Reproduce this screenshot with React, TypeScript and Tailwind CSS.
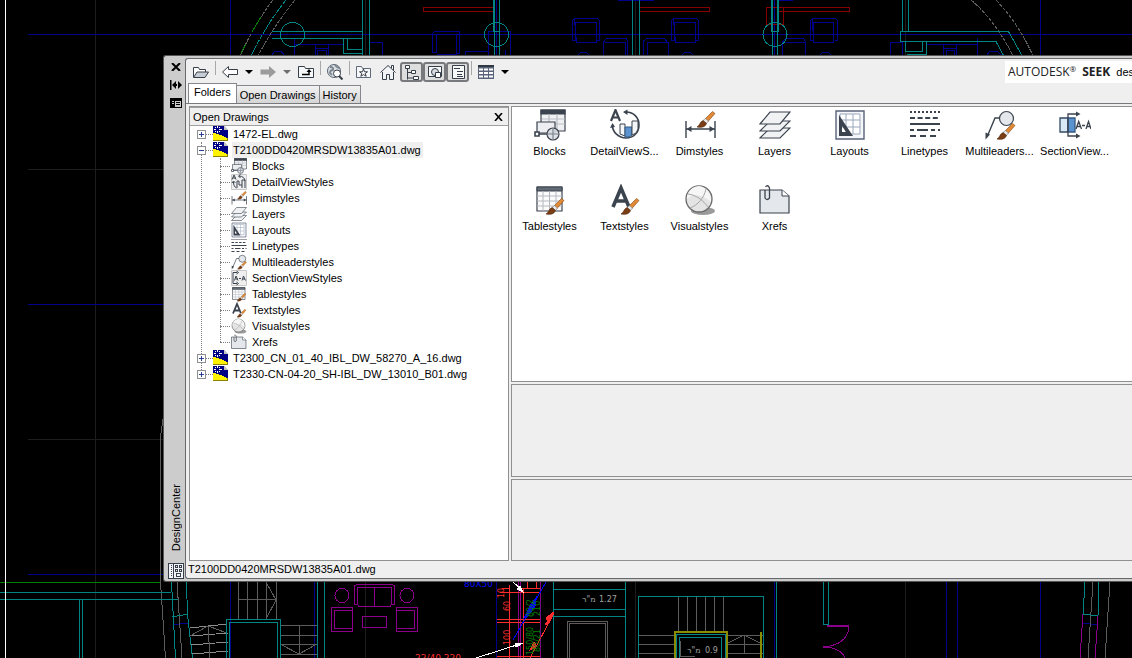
import { useState, type ReactNode } from 'react';

type IconName =
  | 'blocks'
  | 'detail'
  | 'detailSmall'
  | 'dim'
  | 'layers'
  | 'layouts'
  | 'linetypes'
  | 'multileader'
  | 'section'
  | 'sectionSmall'
  | 'table'
  | 'text'
  | 'visual'
  | 'xrefs';

interface StyleItem {
  name: string;
  label: string;
  icon: IconName;
  treeIcon?: IconName;
}

const items: StyleItem[] = [
  { name: 'Blocks', label: 'Blocks', icon: 'blocks' },
  { name: 'DetailViewStyles', label: 'DetailViewS...', icon: 'detail', treeIcon: 'detailSmall' },
  { name: 'Dimstyles', label: 'Dimstyles', icon: 'dim' },
  { name: 'Layers', label: 'Layers', icon: 'layers' },
  { name: 'Layouts', label: 'Layouts', icon: 'layouts' },
  { name: 'Linetypes', label: 'Linetypes', icon: 'linetypes' },
  { name: 'Multileaderstyles', label: 'Multileaders...', icon: 'multileader' },
  { name: 'SectionViewStyles', label: 'SectionView...', icon: 'section', treeIcon: 'sectionSmall' },
  { name: 'Tablestyles', label: 'Tablestyles', icon: 'table' },
  { name: 'Textstyles', label: 'Textstyles', icon: 'text' },
  { name: 'Visualstyles', label: 'Visualstyles', icon: 'visual' },
  { name: 'Xrefs', label: 'Xrefs', icon: 'xrefs' },
];

const drawings = [
  '1472-EL.dwg',
  'T2100DD0420MRSDW13835A01.dwg',
  'T2300_CN_01_40_IBL_DW_58270_A_16.dwg',
  'T2330-CN-04-20_SH-IBL_DW_13010_B01.dwg',
];

const tabs = ['Folders', 'Open Drawings', 'History'];

function Brush({ x = 0, y = 0 }: { x?: number; y?: number }) {
  return (
    <g transform={`translate(${x} ${y})`}>
      <path d="M8 8 15.5 0.5 18 2.5 11 10.5Z" fill="#e08a35" stroke="#8a4715" strokeWidth="0.6" />
      <path d="M6 9.5 8.5 7.5 11.5 10 9.5 12.5Z" fill="#e8e8e8" stroke="#777" strokeWidth="0.6" />
      <path d="M0 16C3 14.500 2.500 11 6 9.500L9.500 12.500C8.500 16 4 17 0 16Z" fill="#7a3d14" stroke="#4f260b" strokeWidth="0.6" />
    </g>
  );
}

const ink = '#3b434e';

const glyphs: Record<IconName, ReactNode> = {
  blocks: (
    <g stroke={ink} strokeWidth="1.2">
      <path d="M7 1h24v21H7z" fill="#eef0f2" />
      <path d="M7 1h24v4H7z" fill={ink} />
      <path d="M15 5v8M23 5v16M8 10h23M20 15h11" stroke="#b9bdc4" />
      <path d="M3 13h18v11H3z" fill="#eceef1" />
      <circle cx="19" cy="25" r="6" fill="#d9dde2" fillOpacity="0.9" />
      <path d="M5 25h8M14 25h10M19 20v10" stroke="#7d848e" />
      <path d="M5 25h8" />
      <path d="M1 23h4v4H1z" fill="#fff" strokeWidth="1.6" />
    </g>
  ),
  detail: (
    <g fill="none" stroke={ink} strokeWidth="1.6">
      <path d="M2 12 6.500 1 11 12M3.700 8.500h5.600" strokeWidth="2.2" />
      <path d="M17 3C25 3 30 9 30 16c0 8-6 13-13 13S3 23 3.500 16" />
      <path d="M18.500 0.500 14 3l4.500 3zM1 19l2.500-5L6 18z" fill={ink} stroke="none" />
      <path d="M11 15h5v12l-5-2z" fill="#f4f6f8" strokeWidth="1" />
      <path d="M16 18h7v8l-3 2h-4z" fill="#5b93d1" stroke="#34597f" strokeWidth="1" />
      <path d="M23 12h6v8l-2 4-4 2z" fill="#f4f6f8" strokeWidth="1" />
    </g>
  ),
  detailSmall: (
    <g fill="none" stroke={ink} strokeWidth="2">
      <path d="M1 1h30v30H1z" fill="#efefef" stroke="#c8c8c8" />
      <path d="m2 11 4-9 4 9M4 8h5M16 4c8 0 12 5 12 10M5 16c0 6 2 10 6 12M2 18l3-4 4 4M19 1l-4 3 4 4" />
      <path d="M12 14v14M12 14h4v8M16 22h6M22 12v16M22 12h6v16" />
    </g>
  ),
  dim: (
    <g>
      <path d="M2 12v17M31 12v17M2 20h29" stroke={ink} strokeWidth="1.4" />
      <path d="m2.500 20 5-3v6zM30.500 20l-5-3v6z" fill={ink} />
      <Brush x={13} y={2} />
    </g>
  ),
  layers: (
    <g stroke={ink} strokeWidth="1.2" fill="#f1f2f4">
      <path d="m1 29 10-10h20L21 29z" />
      <path d="m1 22 10-10h20L21 22z" />
      <path d="m1 15L11 3h20L21 15z" />
    </g>
  ),
  layouts: (
    <g>
      <path d="M2 2h28v28H2z" fill="#f4f6f9" stroke="#59647a" strokeWidth="1.4" />
      <path d="M6 5h20v20H6z" fill="#fff" stroke="#9ba7ba" />
      <path d="M12 5v20M19 5v20M6 11h20M6 18h20" stroke="#9ba7ba" />
      <path fillRule="evenodd" d="M5 6v21h14zM8 17v6h4z" fill={ink} />
    </g>
  ),
  linetypes: (
    <g stroke={ink} strokeWidth="2">
      <path d="M1 3h30" strokeDasharray="2 2" />
      <path d="M1 9h30" strokeDasharray="5 2.600" />
      <path d="M1 15h30" />
      <path d="M1 21h30" strokeDasharray="4 3 11 3" />
      <path d="M1 27h30" strokeDasharray="6 4" />
    </g>
  ),
  multileader: (
    <g>
      <path d="m3 28 8-19h6" fill="none" stroke={ink} strokeWidth="1.4" />
      <path d="m1.500 30.500 0-7 4.500 2z" fill={ink} />
      <circle cx="22.500" cy="9.500" r="7" fill="#e4e7ec" stroke={ink} strokeWidth="1.2" />
      <Brush x={13} y={14} />
    </g>
  ),
  section: (
    <g fill="none" stroke={ink} strokeWidth="1.300">
      <path d="M1 9h8v14H1z" fill="#dbe8f6" stroke="#34495f" />
      <path d="M9 9h7v14H9z" fill="#5b93d1" stroke="#34597f" />
      <path d="M18 5H9v22h9" />
      <path d="m17 2.500 4.500 2.500L17 7.500zM17 24.500l4.500 2.500-4.500 2.500z" fill={ink} stroke="none" />
      <path d="m17 20 2.700-7.500L22.500 20M18 17.500h3.500M23 16.500h3M27 20l2.500-7.500L32 20M28 17.500h3.500" />
    </g>
  ),
  sectionSmall: (
    <g fill="none" stroke={ink} strokeWidth="2">
      <path d="M1 1h30v30H1z" fill="#efefef" stroke="#c8c8c8" />
      <path d="M12 5H4v22h8M11 2l4 3-4 3M11 24l4 3-4 3" />
      <path d="m7 21 3-9 4 9M9 18h4M16 17h4M22 21l3-9 4 9M24 18h4" />
    </g>
  ),
  table: (
    <g>
      <path d="M3 3h25v24H3z" fill="#fbfbfb" stroke={ink} strokeWidth="1.2" />
      <path d="M3 3h25v4H3z" fill="#626a75" stroke={ink} />
      <path d="M9 7v20M15.500 7v20M22 7v20M3 12h25M3 17h25M3 22h25" stroke="#b4b8be" />
      <Brush x={12} y={14} />
    </g>
  ),
  text: (
    <g>
      <path d="M4 23 12 4l8 19M7 17h10" fill="none" stroke={ink} strokeWidth="3.600" />
      <Brush x={12} y={14} />
    </g>
  ),
  visual: (
    <g>
      <ellipse cx="19" cy="27" rx="12" ry="4" fill="#9a9a9a" />
      <circle cx="15" cy="15" r="13" fill="#e4e4e4" stroke="#6a6a6a" strokeWidth="1.300" />
      <path d="M15 2C6 3 3 9 3 15c4-6 16-5 24 3 0-9-4-15-12-16z" fill="#f6f6f6" />
      <path d="M6 24C14 21 20 14 22 5M4 10c8 1 15 6 20 13" fill="none" stroke="#a5a5a5" />
    </g>
  ),
  xrefs: (
    <g>
      <path d="M1 6h22l7 6v17H1z" fill="#e4e7eb" stroke={ink} strokeWidth="1.200" />
      <path d="M23 6v6h7" fill="#fff" stroke={ink} />
      <path d="M6 6v8q2 3 4.500 0V4Q8.500 0 6.500 3" fill="none" stroke={ink} strokeWidth="1.300" />
    </g>
  ),
};

function StyleIcon({ name, className }: { name: IconName; className: string }) {
  return (
    <svg viewBox="0 0 32 32" className={className} aria-hidden="true">
      {glyphs[name]}
    </svg>
  );
}

function DwgIcon() {
  return (
    <svg viewBox="0 0 16 16" className="h-4 w-4 shrink-0" shapeRendering="crispEdges" aria-hidden="true">
      <path d="M0 0h11l4 4v11H0z" fill="#000084" />
      <path d="M11 0v4h4z" fill="#c4c4c4" />
      <path d="M0 7h3v1h3v1h3v1h2v1h2v1h2v3H0z" fill="#fff200" />
      <path d="M0 14.500h15M14.500 12v3" stroke="#8a8200" fill="none" />
      <path d="M4 0h1v2H4zM4 5h1v2H4zM1 3h2v1H1zM6 3h3v1H6zM2 1h1v1H2zM6 1h1v1H6zM2 5h1v1H2zM6 5h1v1H6z" fill="#fff" />
    </svg>
  );
}

// Model space behind the palette, in canvas pixels
function FloorPlan() {
  return (
    <svg className="absolute inset-0 h-full w-full" shapeRendering="crispEdges" fill="none" aria-hidden="true">
      <g stroke="#1d1d1d">
        <path d="M95.500 0v658M365.500 0v658M635.500 0v658M905.500 0v658M28 169.500h140M28 439.500h140" />
      </g>
      <g stroke="#00008c">
        <path d="M28 34.500h1104M28 304.500h140M28 574.500h140" />
        <path d="M230.500 0v658M496.500 0v56M774.500 0v658M1040.500 0v658M496.500 582v76M314.500 582v76M946.500 582v76M957.500 582v76" />
        <path d="M294.500 38v18M294 44.500h49M315.500 56V44.500h13V56M315 48.500h13M317.500 56v-6h9v6M369 42.500h13V56M272 55l3-4h6l3 4" />
        <path d="M434.500 31.500h25v22h-3M434.500 31.500l-2 2v19h4v-18h20v20h-20M465.500 56v-5h23M488.500 56V31.500h22V56M505 50v6" />
        <path d="M574.500 18.500h23l2 2v20h-3M574.500 18.500l-2 2v20h3v-18h21v20h-20zM578 55l3-3h5l3 3M618 0.500h36" />
        <path d="M603.500 56V42l3-3.500h20l1 3V56M605 42.500h20V56M643.500 56V41l3-2.500h18l3 4M647.500 56V42.500h21V56" />
        <path d="M673.500 18.500h23l2 2v20h-3M673.500 18.500l-2 2v20h3v-18h21v20h-20zM682 55l3-3h5l3 3M779 0.500h14" />
        <path d="M782.500 56V42l3-3.500h18l2 3V56M784 42.500h21" />
        <path d="M812.500 18.500h23l2 2v20h-3M812.500 18.500l-2 2v20h3v-18h20v20h-20zM820 55l3-3h5l3 3" />
        <path d="M890.500 56V42.500h12V56M927 44.500h50M977.500 38v18M943.500 56V44.500h13V56M943 48.500h13M946.500 56v-6h8v6M987 55l3-4h7l4 4" />
        <path d="M173 624.500l15-1M1083 623.500l15 1" />
      </g>
      <g stroke="#850000">
        <path d="M423.500 7.500h71v4h-71zM639.500 7.500h70v4h-70zM778.500 7.500h71v4h-71zM766.500 7.500h17v17h-17z" />
      </g>
      <g stroke="#5c5c5c">
        <path d="M273 0Q255 23 240 56M295 0Q273 27 258 56M971 0Q995 20 1013 56M996 0Q1019 24 1033 56" strokeDasharray="4 1" />
        <path d="M261 17 252 32M246 44l-5 9" stroke="#0a7a0a" />
        <path d="M163.500 400v16l-3 20V582l5 76M177 582l5 76" />
        <path d="M238.500 582v37M247.500 582v37M257.500 582v37M266.500 582v37M276.500 582v37M238 599.500h38M266 582l10 18-10 19" />
        <path d="M280 625.500h37M280 635.500h37M280 644.500h37M280 654.500h37M299.500 625v29M280 644l19 10 18-10" />
        <path d="M190 628l37-4M191 636l37-3M191 645l37-3M192 654l36-3" stroke="#8c8c8c" />
        <path d="M190 636l18-10 19 7M208 626l2 32" />
        <path d="M567.500 658v-37h40v37M569.500 658v-35h36v35" />
        <path d="M678.500 597v36M687.500 597v35M696.500 597v35M705.500 597v35M714.500 597v35M723.500 597v36" />
        <path d="M639 635.500h35M639 644.500h35M639 653.500h35M728 635.500h35M728 644.500h35M728 653.500h35M744.500 635v18M728 643l16-8 16 8M680.500 641v15h14" />
        <path d="M1093 582l-5 76M1110 582l-5 76" />
      </g>
      <g stroke="#008484">
        <path d="M286 0Q266 25 251 56" strokeDasharray="5 1" />
        <circle cx="292.500" cy="34.500" r="12" />
        <circle cx="496.500" cy="34.500" r="12" />
        <circle cx="775" cy="34.500" r="12" />
        <path d="M272 31.500h90M272 38.500h90M362.500 0v56M369.500 0v56M343.500 38v15.500h19M347.500 38v11.500h15" />
        <path d="M494.500 0v56M499.500 0v56M493.500 0v31h6M632.500 0v56M639.500 0v56" />
        <path d="M772.500 0v56M777.500 0v56M771.500 0v31.500h7V0" />
        <path d="M902.500 0v31M908.500 0v31M900.500 41.500V31.500h108l14 25M900 41.500h96l8 15M905.500 41v10h17V41M907 54.500h19V41" />
        <path d="M0 592.500h171M0 599.500h178M79.500 599v59M82.500 599v59" />
        <path d="M171.500 582l4 76M186.500 582l1 33 5 43M172 617l16-3" />
        <path d="M226.500 658v-38.500h54V658M229.500 658v-35.500h48V658M317.500 582v76M324.500 582v76" />
        <path d="M553.500 582v76M625.500 582v76M553 589.500h72M553 609.500h72M553 616.500h72" />
        <path d="M638.500 658v-61.500h125V658M676.500 658v-23.500h49V658M679.500 658v-20.500h42V658M776.500 582v76" />
        <path d="M823.500 582v42.500h5V582M1085 582l-2 32 15 2 1-34" />
      </g>
      <path d="M0 582.500h160" stroke="#008000" />
      <path d="M5.500 0v658" stroke="#fff" />
      <g stroke="#8a008a">
        <circle cx="342" cy="595.500" r="7" />
        <circle cx="407" cy="595.500" r="7" />
        <path d="M354.500 604v-18l2-1.500h36l2 1.500v18h-3v-17h-34v17M354 604h3l2 2.500h31l2-2.500M374.500 588v18M362.500 616.500h24v11h-24z" />
        <path d="M352 607.500h-20.500v24h20.500v-3h-18v-18h18zM352.500 610v18M396.500 607.500h20.500v24h-20.500v-3h18v-18h-18zM396.500 610v18" />
        <path d="M518.500 582v76M520.500 582v76M540.500 582v76" />
        <path d="M827 625.500h22M827 626.500h22Q848 642 830 646M823 646.500h7M823 647.500h7Q842 650 845 658" />
        <path d="M1083 614l-3 44M1098 616l-3 42" />
      </g>
      <g stroke="#8c8c00" strokeWidth="2">
        <path d="M675 658v-26h52v26M761 632v26" />
      </g>
      <g stroke="#ff2d2d">
        <path d="M509.500 585v73M523.500 588v70M502 588.500h8M500 592.500h22M518 588.500h22M518 592.500h22M497 619.500h43M497 622.500h43M497 656.500h43M527.500 582v6M536.500 582v6M530 658l24-45" />
        <path d="m554 612-8 6 2 3-3 4 4-2zM530 650l4-8 3 4z" fill="#ff2d2d" />
      </g>
      <g stroke="#0000ff">
        <path d="M546 582l-33 58" />
        <path d="m524 618 6-12 6-8-1 8-8 11z" fill="#0000ff" />
      </g>
      <g stroke="#fff">
        <path d="m513 582 10 9M476 658l47-15" />
        <path d="m523 592-6-3 3-3zM523 643l-7 4-1-3z" fill="#fff" />
      </g>
      <g stroke="none" fontFamily="DejaVu Sans, sans-serif" fontSize="8">
        <text x="464" y="587" fontSize="9" fill="#0000ff">80X50</text>
        <text x="415" y="661" fontSize="9" fill="#ff2d2d">22/40 220</text>
        <text x="599" y="602" fill="#a0a0a0">1.27</text>
        <text x="582" y="602" fill="#a0a0a0">מ"ר</text>
        <text x="705" y="653" fill="#a0a0a0">0.9</text>
        <text x="687" y="653" fill="#a0a0a0">מ"ר</text>
        <g fill="#ff2d2d">
          <text transform="translate(504 598) rotate(-90)">10</text>
          <text transform="translate(510 611) rotate(-90)">60</text>
          <text transform="translate(510 645) rotate(-90)">100</text>
        </g>
        <g fill="#008000">
          <text transform="translate(533 617) rotate(-90)">80/2</text>
          <text transform="translate(540 616) rotate(-90)">210</text>
          <text transform="translate(533 655) rotate(-90)">150/80</text>
          <text transform="translate(540 652) rotate(-90)">80/21</text>
        </g>
      </g>
    </svg>
  );
}

function ToolButton({ label, children, wide = true }: { label: string; children: ReactNode; wide?: boolean }) {
  return (
    <button aria-label={label} className={`flex h-6 shrink-0 items-center justify-center ${wide ? 'w-6' : 'w-3.5'}`}>
      {children}
    </button>
  );
}

function ToggleButton({ label, children }: { label: string; children: ReactNode }) {
  const [on, setOn] = useState(true);
  return (
    <button
      aria-label={label}
      aria-pressed={on}
      onClick={() => setOn(!on)}
      className={`flex h-5 w-[23px] shrink-0 items-center justify-center rounded-[3px] border-2 ${
        on ? 'border-[#77797c] bg-[#dedede]' : 'border-transparent'
      }`}
    >
      {children}
    </button>
  );
}

function Separator() {
  return <span className="mx-0.5 mt-0.5 h-3.5 w-px shrink-0 self-start bg-[#a8a8a8]" />;
}

function ToolIcon({ children }: { children: ReactNode }) {
  return (
    <svg viewBox="0 0 16 16" className="h-4 w-4" fill="none" stroke="#363e49" aria-hidden="true">
      {children}
    </svg>
  );
}

function Caret({ muted = false }: { muted?: boolean }) {
  return (
    <svg viewBox="0 0 8 4" className="h-1 w-2" aria-hidden="true">
      <path d="M0 0h8L4 4z" fill={muted ? '#6e6e6e' : '#000'} />
    </svg>
  );
}

function Toolbar() {
  return (
    <div className="flex h-[25px] shrink-0 items-center pl-[3px]">
      <ToolButton label="Load">
        <ToolIcon>
          <path d="M0.500 13V3.500h5l1 2h6V8" fill="#fff" />
          <path d="M0.500 13.500 4 8h11.500L12 13.500z" fill="#c6ccd3" />
        </ToolIcon>
      </ToolButton>
      <Separator />
      <ToolButton label="Back">
        <ToolIcon>
          <path d="M0.500 8 6.500 2.500v3h9v5h-9v3z" fill="#fff" />
        </ToolIcon>
      </ToolButton>
      <ToolButton label="Back history" wide={false}>
        <Caret />
      </ToolButton>
      <ToolButton label="Forward">
        <ToolIcon>
          <path d="M16 8 9 2v3.500H0.500v5H9V14z" fill="#9b9b9b" stroke="none" />
        </ToolIcon>
      </ToolButton>
      <ToolButton label="Forward history" wide={false}>
        <Caret muted />
      </ToolButton>
      <ToolButton label="Up">
        <ToolIcon>
          <path d="M0.500 13.500v-11h6l1 2h8v9z" fill="#f7f8fa" />
          <path d="M4 10.500h7V7" strokeWidth="1.500" stroke="#000" />
          <path d="m8.500 8 2.500-3 2.500 3z" fill="#000" stroke="none" />
        </ToolIcon>
      </ToolButton>
      <Separator />
      <ToolButton label="Search">
        <ToolIcon>
          <circle cx="7" cy="7" r="6.500" fill="#dde1e6" stroke="#596474" />
          <path d="M3 3q4 0 3 3-3 0-3 3l2 2M8 1q2 3 5 3" stroke="#7c868f" strokeWidth="1.800" />
          <circle cx="10" cy="9.500" r="3.500" fill="#fff" />
          <path d="m12 12 3.500 3.500" strokeWidth="2" />
        </ToolIcon>
      </ToolButton>
      <Separator />
      <ToolButton label="Favorites">
        <ToolIcon>
          <path d="M0.500 13.500v-11h5l1 2h8v9z" fill="#f7f8fa" stroke="#5d6978" />
          <path d="m7.500 5 1 2.800h3L9.200 9.500l1 2.800-2.700-1.700-2.700 1.700 1-2.800L3.500 7.800h3z" fill="#fff" />
        </ToolIcon>
      </ToolButton>
      <ToolButton label="Home">
        <ToolIcon>
          <path d="M2.500 8v7.500h4v-5h3v5h4V8M0.500 8.500 8 1.500l7.500 7M11.500 4V1.500h2V6" fill="#f3f4f6" />
        </ToolIcon>
      </ToolButton>
      <ToggleButton label="Tree view">
        <ToolIcon>
          <path d="M1.500 1.500h4v3h-4zM7.500 6.500h4v3h-4zM9.500 12.500h5v3h-5z" fill="#fff" />
          <path d="M3.500 5v9H9M3.500 8.500h4M3.500 14v1.500" />
        </ToolIcon>
      </ToggleButton>
      <ToggleButton label="Preview">
        <ToolIcon>
          <path d="M1.500 2.500h13v10h-13z" fill="#f7f8fa" />
          <circle cx="8" cy="8" r="3.500" fill="#d8dce1" />
          <path d="M8.500 8.500h5v5h-5z" fill="#fff" />
        </ToolIcon>
      </ToggleButton>
      <ToggleButton label="Description">
        <ToolIcon>
          <path d="M2.500 1.500h12v13h-12z" fill="#f7f8fa" />
          <path d="M4 4.500h6M7 7.500h6M7 10.500h5M7 12.500h6" />
        </ToolIcon>
      </ToggleButton>
      <Separator />
      <ToolButton label="Views">
        <ToolIcon>
          <path d="M0 1h16v14H0z" fill="#59647a" stroke="none" />
          <path d="M1 4.500h4v2H1zM6 4.500h4v2H6zM11 4.500h4v2h-4zM1 8h4v2H1zM6 8h4v2H6zM11 8h4v2h-4zM1 11.500h4v2H1zM6 11.500h4v2H6zM11 11.500h4v2h-4z" fill="#fff" stroke="none" />
          <path d="M0 1h16v2H0z" fill="#303844" stroke="none" />
        </ToolIcon>
      </ToolButton>
      <ToolButton label="View options" wide={false}>
        <Caret />
      </ToolButton>
      <a
        href="#seek"
        className="ml-auto flex h-[22px] w-[127px] shrink-0 items-center gap-1.5 overflow-hidden bg-white pl-[3px] font-['Open_Sans',sans-serif] text-[12px] whitespace-nowrap text-[#222]"
      >
        <span>
          AUTODESK<sup className="text-[8px]">®</sup>
        </span>
        <span className="font-bold">SEEK</span>
        <span className="font-['Liberation_Sans',sans-serif] text-[11px] text-black">des</span>
      </a>
    </div>
  );
}

function Tree() {
  const [open, setOpen] = useState(drawings[1]);

  return (
    <ul className="relative flex-1 overflow-hidden bg-white pl-[7px]">
      <li aria-hidden="true" className="absolute top-4 left-[11px] h-[232px] border-l border-dotted border-[#808080]" />
      {drawings.map((file) => {
        const expanded = open === file;
        return (
          <li key={file} className="relative">
            <div className="flex h-4 items-center">
              <button
                aria-label={expanded ? 'Collapse' : 'Expand'}
                onClick={() => setOpen(expanded ? '' : file)}
                className="h-[9px] w-[9px] shrink-0 bg-white"
              >
                <svg viewBox="0 0 9 9" className="h-[9px] w-[9px]" fill="none" shapeRendering="crispEdges">
                  <path d="M0.500 0.500h8v8h-8z" stroke="#8f8f8f" />
                  <path d={expanded ? 'M2 4.500h5' : 'M2 4.500h5M4.500 2v5'} stroke="#2b3f8f" />
                </svg>
              </button>
              <span className="w-[7px] border-t border-dotted border-[#808080]" />
              <DwgIcon />
              <span className={`ml-[3px] h-4 pr-0.5 pl-px ${expanded ? 'bg-[#efefef]' : ''}`}>{file}</span>
            </div>
            {expanded && (
              <ul className="relative ml-[23px]">
                <li aria-hidden="true" className="absolute top-0 left-0 h-[184px] border-l border-dotted border-[#808080]" />
                {items.map((item) => (
                  <li key={item.name} className="flex h-4 items-center">
                    <span className="mr-px w-[10px] border-t border-dotted border-[#808080]" />
                    <StyleIcon name={item.treeIcon ?? item.icon} className="h-4 w-4 shrink-0" />
                    <span className="ml-[5px]">{item.name}</span>
                  </li>
                ))}
              </ul>
            )}
          </li>
        );
      })}
    </ul>
  );
}

function TitleBar() {
  return (
    <div className="flex w-[21px] shrink-0 flex-col items-center pl-0.5">
      <button aria-label="Close palette" className="flex h-[18px] w-4 items-center justify-center">
        <svg viewBox="0 0 10 8" className="h-2 w-2.5" stroke="#000" strokeWidth="2">
          <path d="m1 0 8 8M9 0 1 8" />
        </svg>
      </button>
      <button aria-label="Auto-hide" className="flex h-[18px] w-4 items-center justify-center">
        <svg viewBox="0 0 12 10" className="h-2.5 w-3">
          <path d="M0 0h1.500v10H0zM2 5l4-4v8zM12 5 8 1v8zM6 4h1v2H6z" />
        </svg>
      </button>
      <button aria-label="Properties" className="flex h-[18px] w-4 items-center justify-center">
        <svg viewBox="0 0 12 10" className="h-2.5 w-3" shapeRendering="crispEdges">
          <path d="M0 0h12v10H0z" />
          <path d="M2 3h2v1H2zM2 5h2v1H2zM5 3h6v6H5z" fill="#ccc" />
          <path d="M6 4h4v1H6zM6 6h4v1H6z" />
        </svg>
      </button>
      <h1 className="mt-auto mb-3 rotate-180 text-[11px] leading-4 [writing-mode:vertical-rl]">DesignCenter</h1>
      <svg viewBox="0 0 16 16" className="h-4 w-4 shrink-0" shapeRendering="crispEdges" fill="none" stroke="#363e49">
        <path d="M0.500 0.500h15v15H0.500z" fill="#f1f3f6" />
        <path d="M5.500 0v16" />
        <path d="M3 2v12" strokeDasharray="1 1" />
        <path d="M7.500 2.500h2v2h-2zM11.500 2.500h2v2h-2zM7.500 6.500h2v2h-2zM11.500 6.500h2v2h-2zM8.500 10.500h4v3h-4z" />
      </svg>
    </div>
  );
}

export default function App() {
  const [tab, setTab] = useState('Folders');

  return (
    <main className="relative flex h-screen overflow-hidden bg-black pt-[55px] pb-[76px] pl-[163px] font-['Liberation_Sans',Arial,sans-serif] text-[11px] leading-4 text-black">
      <FloorPlan />

      <section aria-label="DesignCenter" className="relative flex min-w-0 flex-1 rounded-l-[3px] border border-r-0 border-[#555] bg-[#ccc] py-0.5">
        <TitleBar />
        <div className="flex min-w-0 flex-1 flex-col rounded-l-[3px] border border-r-0 border-[#66686b] bg-[#efefef]">
          <Toolbar />

          <div role="tablist" className="flex h-5 shrink-0 items-end border-b border-[#77797c] pl-0.5">
            {tabs.map((name) => (
              <button
                key={name}
                role="tab"
                aria-selected={tab === name}
                onClick={() => setTab(name)}
                className={
                  tab === name
                    ? 'h-5 border border-b-0 border-[#85878c] bg-white px-[5px] pb-1'
                    : 'h-[18px] border border-b-0 border-l-0 border-[#85878c] bg-linear-to-b from-[#f2f2f2] to-[#d5d5d5] px-[3px]'
                }
              >
                {name}
              </button>
            ))}
          </div>

          <div className="flex min-h-0 flex-1 gap-0.5 pt-0.5 pl-[3px]">
            <div className="flex w-[320px] shrink-0 flex-col border border-[#909090]">
              <div className="flex h-[19px] shrink-0 items-center justify-between border-y border-[#a0a0a0] pr-[5px] pl-[3px]">
                <h2>Open Drawings</h2>
                <button aria-label="Close tree">
                  <svg viewBox="0 0 9 8" className="h-2 w-[9px]" stroke="#000" strokeWidth="1.600">
                    <path d="m1 0 7 8M8 0 1 8" />
                  </svg>
                </button>
              </div>
              <Tree />
            </div>

            <div className="flex min-w-0 flex-1 flex-col gap-0.5">
              <ul className="flex min-h-0 flex-1 flex-wrap content-start border border-r-0 border-[#909090] bg-white pt-0.5">
                {items.map((item) => (
                  <li key={item.name} title={item.name} className="flex h-[75px] w-[75px] flex-col items-center gap-0.5">
                    <StyleIcon name={item.icon} className="h-8 w-8 shrink-0" />
                    <span className="whitespace-nowrap">{item.label}</span>
                  </li>
                ))}
              </ul>
              <div aria-label="Preview" className="h-[93px] shrink-0 border border-r-0 border-[#909090]" />
              <div aria-label="Description" className="h-[82px] shrink-0 border border-r-0 border-[#909090]" />
            </div>
          </div>

          <footer className="h-[17px] shrink-0 pl-0.5">T2100DD0420MRSDW13835A01.dwg</footer>
        </div>
      </section>
    </main>
  );
}
